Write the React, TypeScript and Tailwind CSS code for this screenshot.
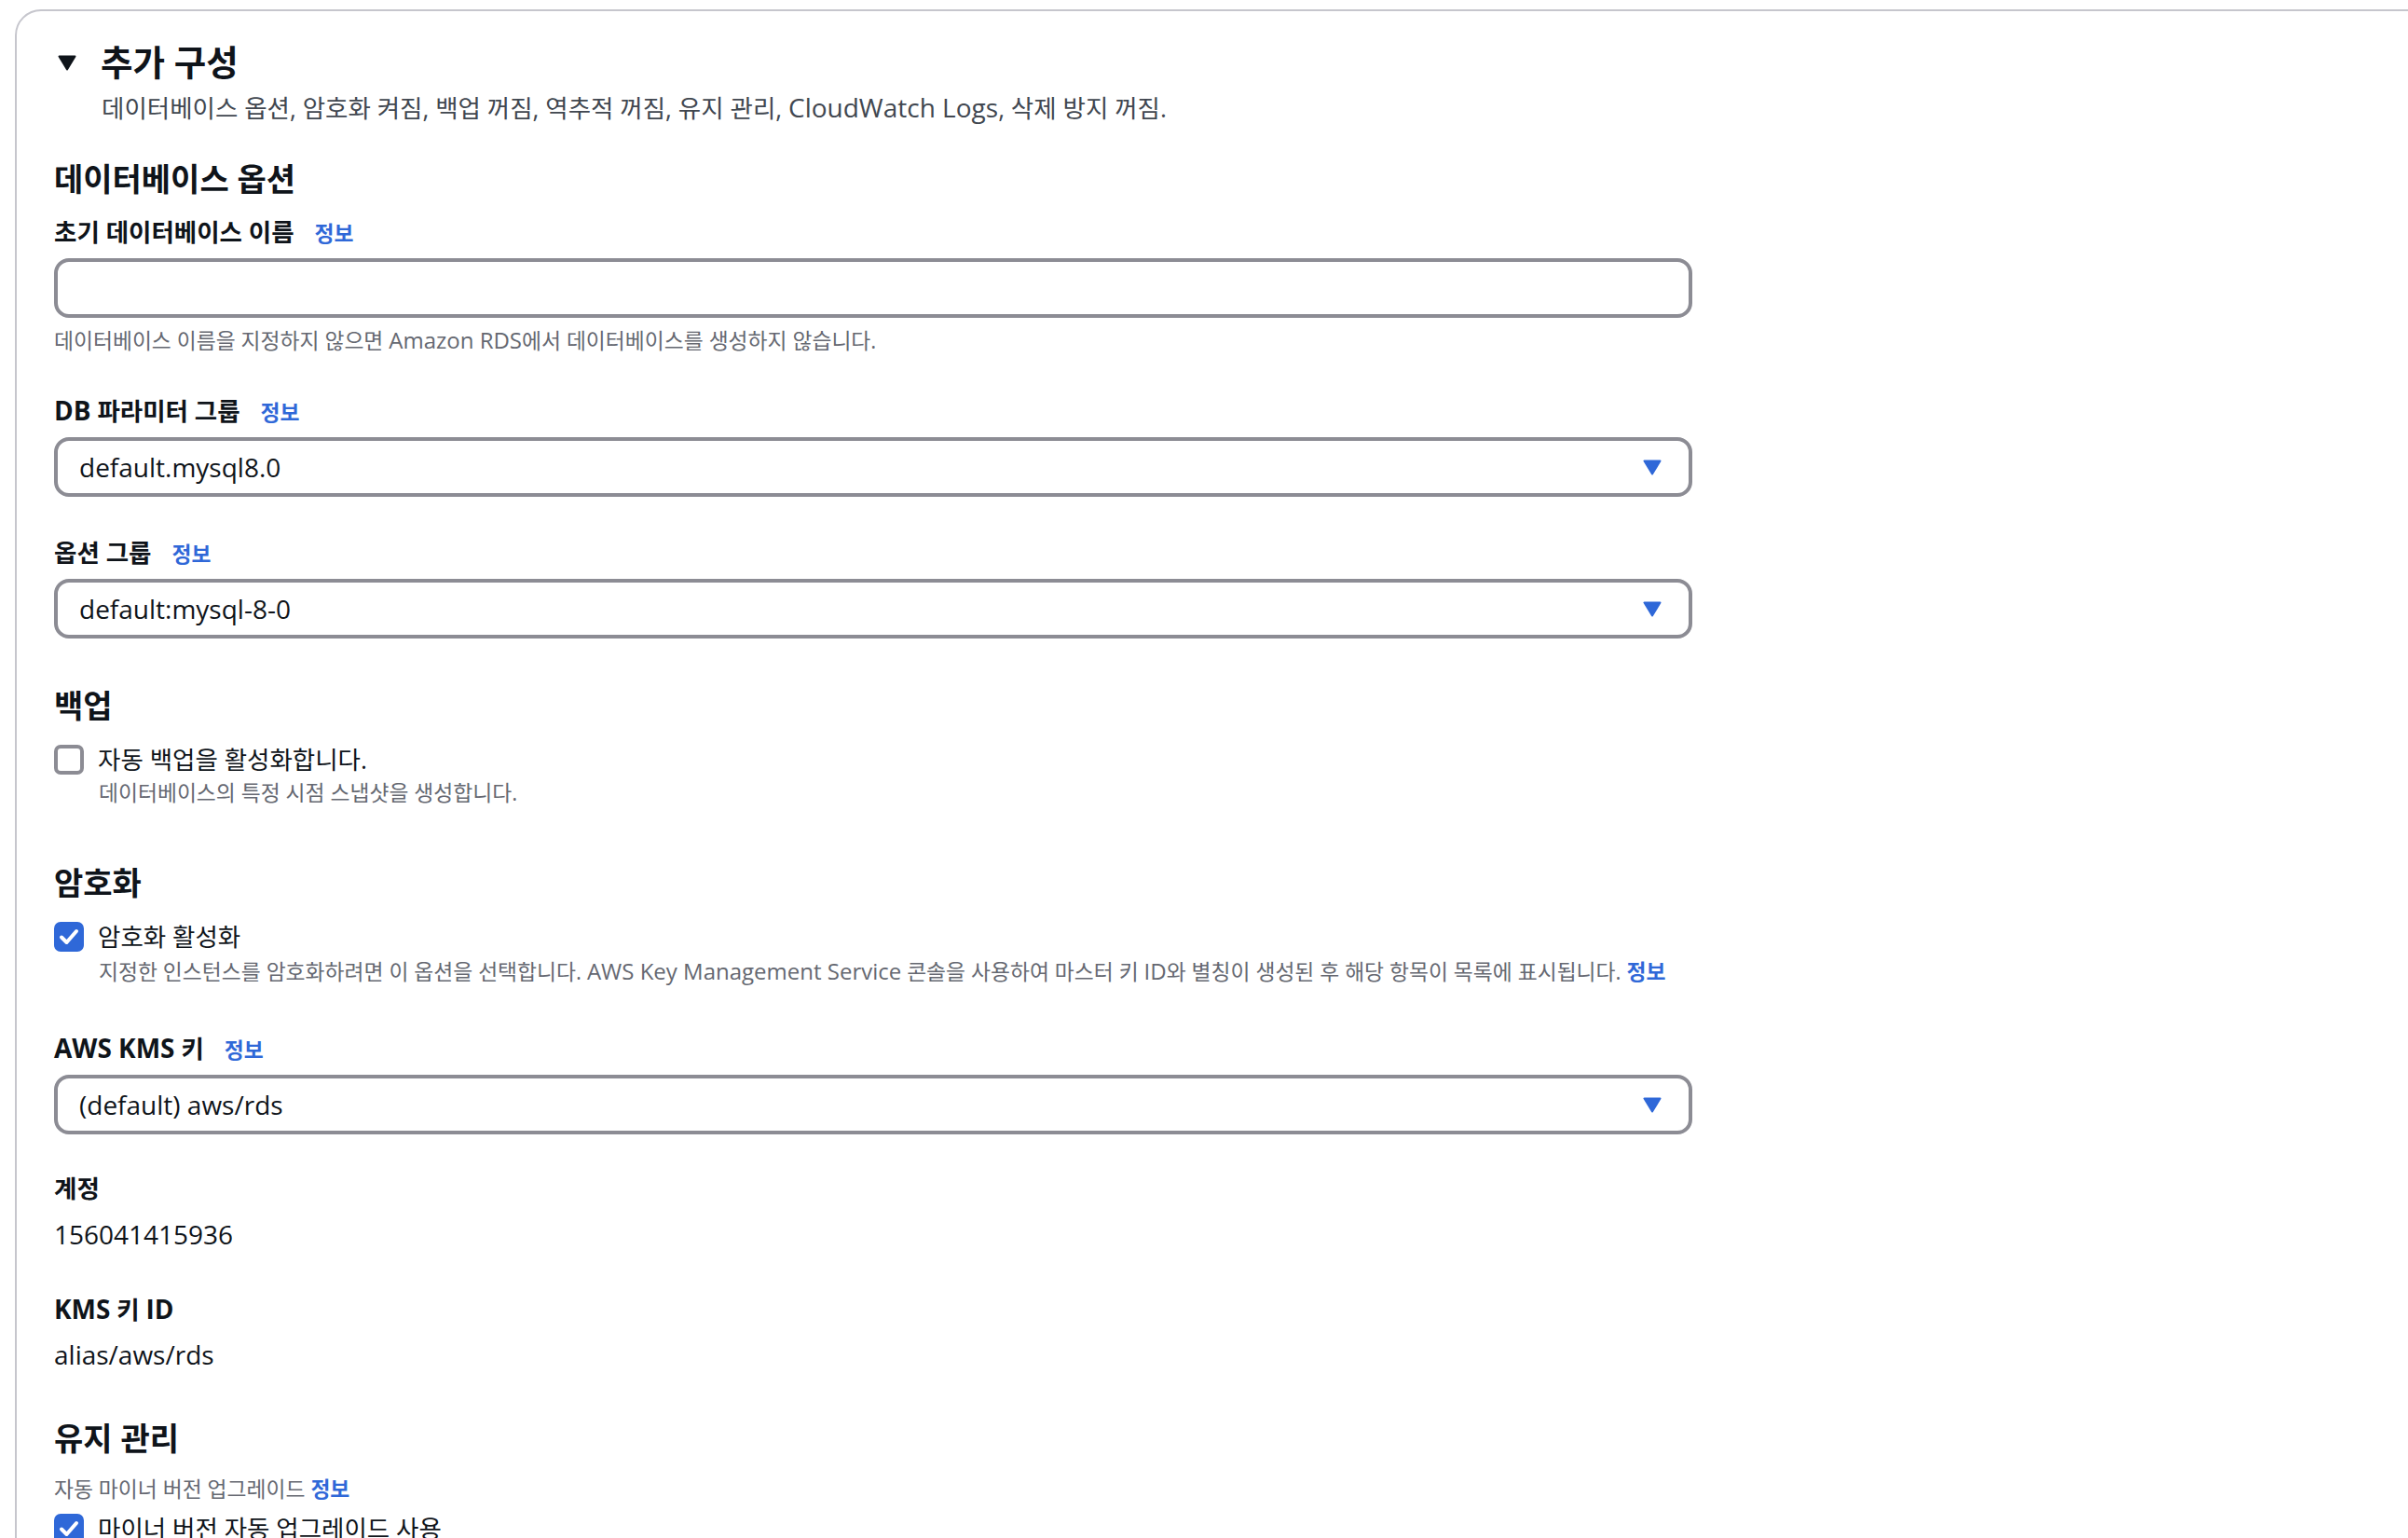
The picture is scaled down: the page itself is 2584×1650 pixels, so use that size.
import React from "react";

// 2x-scaled recreation of the RDS "추가 구성" expandable container
function Info() {
  return <span className="ml-[22px] text-[22.8px] font-bold text-[#2f68d8]">정보</span>;
}

function Latin({ children }: { children: React.ReactNode }) {
  return <span className="text-[28px]">{children}</span>;
}

function SmallLatin({ children }: { children: React.ReactNode }) {
  return <span className="text-[24px]">{children}</span>;
}

function Arrow() {
  return (
    <svg width="20" height="17" viewBox="0 0 20 17">
      <path d="M1.5 1.5 H18.5 L10 15.5 Z" fill="#2f68d8" stroke="#2f68d8" strokeWidth="2" strokeLinejoin="round" />
    </svg>
  );
}

function Select({ value, className }: { value: string; className: string }) {
  return (
    <div
      className={`flex h-[64px] w-[1758px] items-center justify-between rounded-[16px] border-[4px] border-[#8c8c94] pl-[23px] pr-[29px] ${className}`}
    >
      <span className="text-[28px] text-[#0f141a]">{value}</span>
      <Arrow />
    </div>
  );
}

function Checkbox({ checked }: { checked: boolean }) {
  if (!checked) {
    return <div className="h-[32px] w-[32px] shrink-0 rounded-[7px] border-[4px] border-[#8c8c94] bg-white" />;
  }
  return (
    <div className="flex h-[32px] w-[32px] shrink-0 items-center justify-center rounded-[7px] bg-[#2f68d8]">
      <svg width="32" height="32" viewBox="0 0 32 32">
        <path d="M8 16.5 L13.5 22 L24 10" fill="none" stroke="white" strokeWidth="4" strokeLinecap="round" strokeLinejoin="round" />
      </svg>
    </div>
  );
}

export default function App() {
  return (
    <div className="h-[1650px] w-full overflow-hidden bg-white font-['Open_Sans','Noto_Sans_CJK_KR',sans-serif] text-[#0f141a]">
      <div className="ml-[16px] mt-[10px] h-[1720px] w-[2640px] rounded-[28px] border-2 border-[#c6c6cd] pl-[40px] pt-[35px]">
        {/* header */}
        <div className="flex h-[40px] items-center">
          <svg className="ml-[4px]" width="20" height="17" viewBox="0 0 20 17">
            <path d="M1.5 1.5 H18.5 L10 15.5 Z" fill="#0f141a" stroke="#0f141a" strokeWidth="2" strokeLinejoin="round" />
          </svg>
          <span className="ml-[26px] text-[37.5px] font-bold leading-[40px]">추가 구성</span>
        </div>
        <div className="mt-[12px] h-[32px] whitespace-nowrap pl-[51px] text-[26.5px] leading-[32px] text-[#414750]">
          데이터베이스 옵션, 암호화 켜짐, 백업 꺼짐, 역추적 꺼짐, 유지 관리, <Latin>CloudWatch Logs</Latin>, 삭제 방지 꺼짐.
        </div>

        {/* 데이터베이스 옵션 */}
        <div className="mt-[41px] h-[40px] text-[34px] font-bold leading-[40px]">데이터베이스 옵션</div>
        <div className="mt-[21px] h-[32px] whitespace-nowrap text-[26.5px] font-bold leading-[32px]">
          초기 데이터베이스 이름
          <Info />
        </div>
        <div className="mt-[12px] h-[64px] w-[1758px] rounded-[16px] border-[4px] border-[#8c8c94]" />
        <div className="mt-[10px] h-[28px] whitespace-nowrap text-[22.8px] leading-[28px] text-[#656871]">
          데이터베이스 이름을 지정하지 않으면 <SmallLatin>Amazon RDS</SmallLatin>에서 데이터베이스를 생성하지 않습니다.
        </div>

        <div className="mt-[45px] h-[32px] whitespace-nowrap text-[26.5px] font-bold leading-[32px]">
          <Latin>DB</Latin> 파라미터 그룹
          <Info />
        </div>
        <Select value="default.mysql8.0" className="mt-[13px]" />

        <div className="mt-[44px] h-[32px] whitespace-nowrap text-[26.5px] font-bold leading-[32px]">
          옵션 그룹
          <Info />
        </div>
        <Select value="default:mysql-8-0" className="mt-[12px]" />

        {/* 백업 */}
        <div className="mt-[52px] h-[40px] text-[34px] font-bold leading-[40px]">백업</div>
        <div className="mt-[22px] flex h-[32px] items-center">
          <Checkbox checked={false} />
          <span className="ml-[15px] text-[26.5px] leading-[32px]">자동 백업을 활성화합니다.</span>
        </div>
        <div className="mt-[6px] h-[28px] whitespace-nowrap pl-[48px] text-[22.8px] leading-[28px] text-[#656871]">
          데이터베이스의 특정 시점 스냅샷을 생성합니다.
        </div>

        {/* 암호화 */}
        <div className="mt-[62px] h-[40px] text-[34px] font-bold leading-[40px]">암호화</div>
        <div className="mt-[22px] flex h-[32px] items-center">
          <Checkbox checked />
          <span className="ml-[15px] text-[26.5px] leading-[32px]">암호화 활성화</span>
        </div>
        <div className="mt-[7px] h-[28px] whitespace-nowrap pl-[48px] text-[22.8px] leading-[28px] text-[#656871]">
          지정한 인스턴스를 암호화하려면 이 옵션을 선택합니다. <SmallLatin>AWS Key Management Service</SmallLatin> 콘솔을 사용하여 마스터 키{" "}
          <SmallLatin>ID</SmallLatin>와 별칭이 생성된 후 해당 항목이 목록에 표시됩니다.{" "}
          <span className="font-bold text-[#2f68d8]">정보</span>
        </div>

        <div className="mt-[52px] h-[32px] whitespace-nowrap text-[26.5px] font-bold leading-[32px]">
          <Latin>AWS KMS</Latin> 키
          <Info />
        </div>
        <Select value="(default) aws/rds" className="mt-[13px]" />

        <div className="mt-[42px] h-[32px] text-[26.5px] font-bold leading-[32px]">계정</div>
        <div className="mt-[17px] h-[32px] text-[28px] leading-[32px]">156041415936</div>

        <div className="mt-[48px] h-[32px] whitespace-nowrap text-[26.5px] font-bold leading-[32px]">
          <Latin>KMS</Latin> 키 <Latin>ID</Latin>
        </div>
        <div className="mt-[17px] h-[32px] text-[28px] leading-[32px]">alias/aws/rds</div>

        {/* 유지 관리 */}
        <div className="mt-[54px] h-[40px] text-[34px] font-bold leading-[40px]">유지 관리</div>
        <div className="mt-[21px] h-[28px] whitespace-nowrap text-[22.8px] leading-[28px] text-[#656871]">
          자동 마이너 버전 업그레이드 <span className="font-bold text-[#2f68d8]">정보</span>
        </div>
        <div className="mt-[12px] flex h-[32px] items-center">
          <Checkbox checked />
          <span className="ml-[15px] text-[26.5px] leading-[32px]">마이너 버전 자동 업그레이드 사용</span>
        </div>
      </div>
    </div>
  );
}
